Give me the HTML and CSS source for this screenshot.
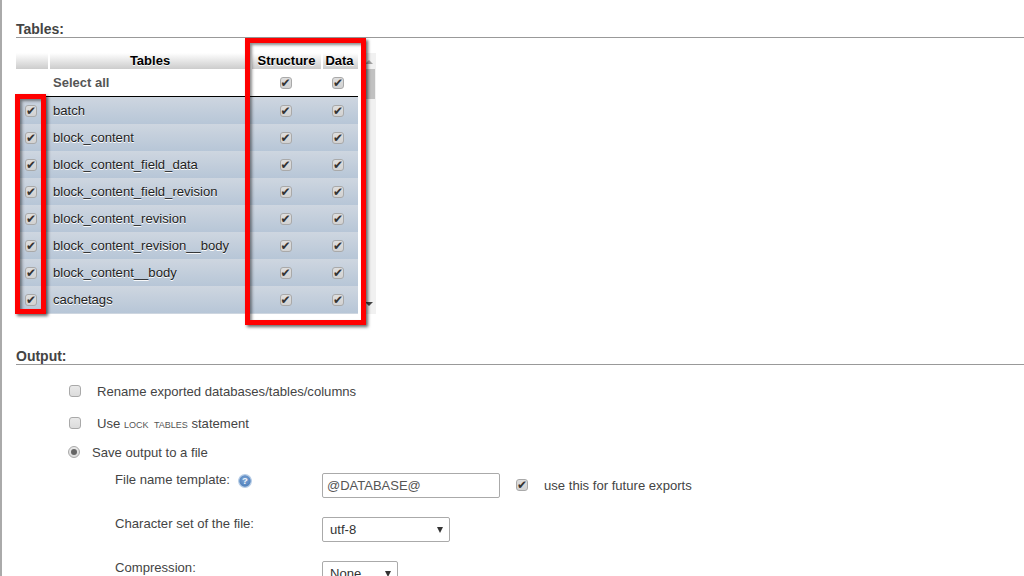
FILE: index.html
```html
<!DOCTYPE html>
<html lang="en">
<head>
  <meta charset="UTF-8" />
  <title>Export</title>
  <link rel="stylesheet" href="styles.css">
</head>
<body>
  <div class="page">
    <h3 class="section-title tables-title">Tables:</h3>

    <div class="scroller">
      <table class="export-table">
        <thead>
          <tr>
            <th class="col-check"></th>
            <th class="col-name">Tables</th>
            <th class="col-structure">Structure</th>
            <th class="col-data">Data</th>
          </tr>
        </thead>
        <tbody>
          <tr class="select-all">
            <td></td>
            <td class="name">Select all</td>
            <td class="mid"><input type="checkbox" checked></td>
            <td class="mid data"><input type="checkbox" checked></td>
          </tr>
          <tr><td class="mid first"><input type="checkbox" checked></td><td class="name">batch</td><td class="mid"><input type="checkbox" checked></td><td class="mid data"><input type="checkbox" checked></td></tr>
          <tr><td class="mid first"><input type="checkbox" checked></td><td class="name">block_content</td><td class="mid"><input type="checkbox" checked></td><td class="mid data"><input type="checkbox" checked></td></tr>
          <tr><td class="mid first"><input type="checkbox" checked></td><td class="name">block_content_field_data</td><td class="mid"><input type="checkbox" checked></td><td class="mid data"><input type="checkbox" checked></td></tr>
          <tr><td class="mid first"><input type="checkbox" checked></td><td class="name">block_content_field_revision</td><td class="mid"><input type="checkbox" checked></td><td class="mid data"><input type="checkbox" checked></td></tr>
          <tr><td class="mid first"><input type="checkbox" checked></td><td class="name">block_content_revision</td><td class="mid"><input type="checkbox" checked></td><td class="mid data"><input type="checkbox" checked></td></tr>
          <tr><td class="mid first"><input type="checkbox" checked></td><td class="name">block_content_revision__body</td><td class="mid"><input type="checkbox" checked></td><td class="mid data"><input type="checkbox" checked></td></tr>
          <tr><td class="mid first"><input type="checkbox" checked></td><td class="name">block_content__body</td><td class="mid"><input type="checkbox" checked></td><td class="mid data"><input type="checkbox" checked></td></tr>
          <tr><td class="mid first"><input type="checkbox" checked></td><td class="name">cachetags</td><td class="mid"><input type="checkbox" checked></td><td class="mid data"><input type="checkbox" checked></td></tr>
          <tr><td></td><td></td><td></td><td></td></tr>
        </tbody>
      </table>
      <div class="scrollbar">
        <span class="arrow-up"></span>
        <span class="thumb"></span>
        <span class="arrow-down"></span>
      </div>
    </div>

    <h3 class="section-title output-title">Output:</h3>

    <div class="option rename"><input type="checkbox"><label>Rename exported databases/tables/columns</label></div>
    <div class="option lock"><input type="checkbox"><label>Use <span class="sql">lock tables</span> statement</label></div>
    <div class="option save"><input type="radio" checked><label>Save output to a file</label></div>

    <div class="field field-file">
      <div class="field-label">File name template:
        <svg class="help" width="14" height="14" viewBox="0 0 14 14">
          <defs>
            <radialGradient id="helpFill" cx="50%" cy="40%" r="60%">
              <stop offset="0" stop-color="#7fa6d6"/>
              <stop offset="1" stop-color="#4a7cb8"/>
            </radialGradient>
          </defs>
          <circle cx="7" cy="7" r="6.3" fill="url(#helpFill)" stroke="#b7cde6" stroke-width="1.2"/>
          <text x="7" y="10.3" text-anchor="middle" class="help-mark">?</text>
        </svg>
      </div>
      <input class="text-input" type="text" value="@DATABASE@">
      <input class="future" type="checkbox" checked>
      <span class="future-label">use this for future exports</span>
    </div>

    <div class="field field-charset">
      <div class="field-label">Character set of the file:</div>
      <div class="select charset">utf-8</div>
    </div>

    <div class="field field-compression">
      <div class="field-label">Compression:</div>
      <div class="select compression">None</div>
    </div>

    <div class="callout callout-left"></div>
    <div class="callout callout-right"></div>
  </div>
</body>
</html>
```

FILE: styles.css
```css
html, body {
  margin: 0;
  height: 576px;
  overflow: hidden;
  background: #fff;
}
body {
  font-family: "Liberation Sans", Arial, sans-serif;
  font-size: 13.1px;
  color: #444;
}
.page {
  position: relative;
  height: 576px;
  box-sizing: border-box;
  border-left: 2px solid #aaa;
  padding: 21px 0 0 14px;
}
.section-title {
  margin: 0;
  height: 16px;
  line-height: 16px;
  font-size: 14px;
  font-weight: bold;
  color: #444;
  border-bottom: 1px solid #999;
}

/* tables */
.scroller {
  display: flex;
  width: 360px;
  height: 261px;
  margin-top: 15px;
  overflow: hidden;
}
.export-table {
  width: 342px;
  flex: none;
  align-self: flex-start;
  border-collapse: separate;
  border-spacing: 0;
  table-layout: fixed;
  color: #222;
}
.export-table th {
  box-sizing: border-box;
  height: 16px;
  padding: 0;
  font-size: 13px;
  line-height: 16px;
  color: #000;
  text-shadow: 0 1px 0 #fff;
  background: linear-gradient(#fff, #ccc);
  border-left: 2px solid #fff;
}
.export-table th:first-child {
  border-left: 0;
}
.col-check { width: 32px; }
.col-structure { width: 71px; }
.export-table .col-data {
  width: 37px;
  padding-right: 2px;
}
.export-table td {
  height: 27px;
  padding: 0;
  box-sizing: border-box;
  background: linear-gradient(#ced6e0, #b7c6d7);
}
.export-table .select-all td {
  height: 28px;
  background: #fff;
  border-bottom: 1px solid #000;
}
.export-table .name {
  padding-left: 5px;
  text-shadow: 0 1px 0 #fff;
}
.select-all .name {
  font-weight: bold;
  color: #555;
  font-size: 13px;
}
.mid {
  text-align: center;
}
.mid input[type="checkbox"] {
  display: block;
  margin: 0 auto;
}
.export-table .first {
  padding-right: 2px;
}
.export-table .data {
  padding-right: 3px;
}
.scrollbar {
  position: relative;
  flex: none;
  width: 15px;
  margin-left: 3px;
  background: #f1f1f1;
}
.thumb {
  position: absolute;
  top: 16px;
  left: 0;
  width: 14px;
  height: 30px;
  background: #c1c1c1;
}
.arrow-up, .arrow-down {
  position: absolute;
  left: 4px;
  border-left: 4px solid transparent;
  border-right: 4px solid transparent;
}
.arrow-up {
  top: 7px;
  border-bottom: 4px solid #a3a3a3;
}
.arrow-down {
  bottom: 8px;
  border-top: 4px solid #444;
}

/* checkboxes */
input[type="checkbox"], input[type="radio"] {
  appearance: none;
  -webkit-appearance: none;
  box-sizing: border-box;
  width: 12px;
  height: 12px;
  margin: 0;
  vertical-align: middle;
  background: linear-gradient(#e9e9e9, #dcdcdc);
  border: 1px solid #a9a9a9;
  border-radius: 3px;
  position: relative;
}
input[type="checkbox"]:checked {
  background: linear-gradient(#dedede, #d2d2d2);
}
input[type="checkbox"]:checked::after {
  content: "\2714";
  position: absolute;
  left: -1px;
  top: -1px;
  width: 12px;
  text-align: center;
  font: bold 12px/12px "DejaVu Sans", sans-serif;
  color: #333;
}
input[type="radio"] {
  border-radius: 50%;
}
input[type="radio"]:checked::after {
  content: "";
  position: absolute;
  left: 2px;
  top: 2px;
  width: 6px;
  height: 6px;
  border-radius: 50%;
  background: #666;
}

/* output */
.output-title {
  margin-top: 34px;
}
.option {
  display: flex;
  align-items: center;
  height: 16px;
  padding-left: 53px;
}
.option label {
  margin-left: 16px;
}
.rename { margin-top: 18px; }
.lock { margin-top: 16px; }
.save { margin-top: 13px; }
.save input { margin-left: -1px; }
.save label { margin-left: 12px; }
.sql {
  font-variant: small-caps;
  font-size: 12.6px;
  word-spacing: 2px;
  color: #555;
}
.field {
  display: flex;
  align-items: flex-start;
  padding-left: 99px;
}
.field-label {
  width: 207px;
  flex: none;
  line-height: 16px;
  margin-top: -1px;
}
.field-file { margin-top: 13px; }
.field-charset { margin-top: 19px; }
.field-compression { margin-top: 19px; }
.help {
  margin-left: 4px;
  vertical-align: -4px;
}
.help-mark {
  font: bold 9.5px "Liberation Sans", sans-serif;
  fill: #f2f6fb;
}
.text-input {
  box-sizing: border-box;
  width: 178px;
  height: 25px;
  padding: 0 4px;
  font: 13px "Liberation Sans", sans-serif;
  color: #555;
  background: #fff;
  border: 1px solid #aaa;
  border-radius: 2px;
}
.future {
  margin: 6px 0 0 16px !important;
}
.future-label {
  margin: 5px 0 0 16px;
}
.select {
  position: relative;
  box-sizing: border-box;
  height: 25px;
  padding: 0 7px;
  line-height: 24px;
  font-size: 13.1px;
  color: #333;
  background: #fff;
  border: 1px solid #aaa;
  border-radius: 2px;
}
.select::after {
  content: "";
  position: absolute;
  right: 6px;
  top: 9px;
  border-left: 3px solid transparent;
  border-right: 3px solid transparent;
  border-top: 6px solid #333;
}
.charset { width: 128px; }
.compression { width: 76px; }

/* red annotation boxes */
.callout {
  position: absolute;
  box-sizing: border-box;
  border: 5px solid #f00;
  box-shadow: 2px 2px 3px rgba(0, 0, 0, .6), inset 2px 2px 3px rgba(0, 0, 0, .45);
}
.callout-left {
  left: 13px;
  top: 94px;
  width: 31px;
  height: 220px;
}
.callout-right {
  left: 243px;
  top: 38px;
  width: 121px;
  height: 287px;
}
```
